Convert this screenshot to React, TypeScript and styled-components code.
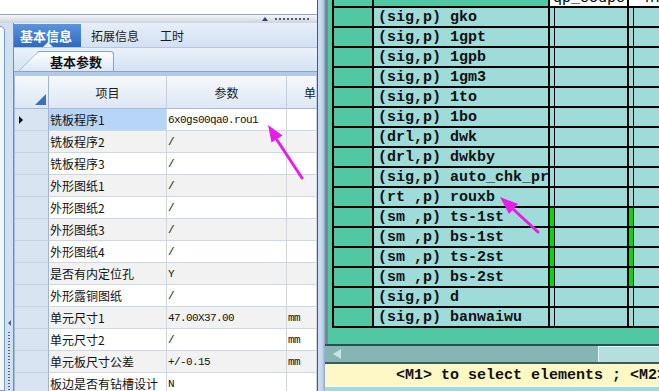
import React from 'react';
import styled, { createGlobalStyle } from 'styled-components';

type Param = { name: string; value: string; unit?: string };

const params: Param[] = [
  { name: '铣板程序1', value: '6x0gs00qa0.rou1' },
  { name: '铣板程序2', value: '/' },
  { name: '铣板程序3', value: '/' },
  { name: '外形图纸1', value: '/' },
  { name: '外形图纸2', value: '/' },
  { name: '外形图纸3', value: '/' },
  { name: '外形图纸4', value: '/' },
  { name: '是否有内定位孔', value: 'Y' },
  { name: '外形露铜图纸', value: '/' },
  { name: '单元尺寸1', value: '47.00X37.00', unit: 'mm' },
  { name: '单元尺寸2', value: '/', unit: 'mm' },
  { name: '单元板尺寸公差', value: '+/-0.15', unit: 'mm' },
  { name: '板边是否有钻槽设计', value: 'N' },
];

type Layer = { label: string; flagged?: boolean };

const layers: Layer[] = [
  { label: '(sig,p) gko' },
  { label: '(sig,p) 1gpt' },
  { label: '(sig,p) 1gpb' },
  { label: '(sig,p) 1gm3' },
  { label: '(sig,p) 1to' },
  { label: '(sig,p) 1bo' },
  { label: '(drl,p) dwk' },
  { label: '(drl,p) dwkby' },
  { label: '(sig,p) auto_chk_pr' },
  { label: '(rt ,p) rouxb' },
  { label: '(sm ,p) ts-1st', flagged: true },
  { label: '(sm ,p) bs-1st', flagged: true },
  { label: '(sm ,p) ts-2st', flagged: true },
  { label: '(sm ,p) bs-2st', flagged: true },
  { label: '(sig,p) d' },
  { label: '(sig,p) banwaiwu' },
];

const GlobalStyle = createGlobalStyle`
  html, body {
    margin: 0;
    padding: 0;
    background: #fff;
    overflow: hidden;
  }
  * { box-sizing: border-box; }
`;

export default function App() {
  return (
    <>
      <GlobalStyle />
      <Page>
        <LeftPanel>
          <TopBlank />
          <TitleBar>
            <CaretUp />
            <Grip />
          </TitleBar>
          <LeftBody>
            <SideDock>
              <DockTab />
              <DockGrip>
                <DockArrow />
                <DockDots />
              </DockGrip>
            </SideDock>
            <Editor>
              <TabStrip>
                <Tab $active>基本信息</Tab>
                <Tab>拓展信息</Tab>
                <Tab>工时</Tab>
              </TabStrip>
              <SubTabStrip>
                <SubTab>基本参数</SubTab>
              </SubTabStrip>
              <SubTabBand />
              <PropGrid>
                <CornerCell><CornerMark /></CornerCell>
                <HeadCell>项目</HeadCell>
                <HeadCell>参数</HeadCell>
                <HeadCell $indent>单位</HeadCell>
                {params.map((p, i) => {
                  const alt = i % 2 === 1;
                  const selected = i === 0;
                  return (
                    <React.Fragment key={p.name}>
                      <RowHead>{selected && <RowMarker />}</RowHead>
                      <NameCell $alt={alt} $selected={selected}>{p.name}</NameCell>
                      <ValueCell $alt={alt}>{p.value}</ValueCell>
                      <ValueCell $alt={alt}>{p.unit}</ValueCell>
                    </React.Fragment>
                  );
                })}
              </PropGrid>
            </Editor>
          </LeftBody>
        </LeftPanel>

        <Divider />

        <RightPanel>
          <ListArea>
            <ListGrid>
              <TealCell />
              <TealCell />
              <ColumnTitle>qp_coupc</ColumnTitle>
              <ColumnTitle $indent>nf</ColumnTitle>
              {layers.map((l) => (
                <React.Fragment key={l.label}>
                  <TealCell />
                  <LayerName>{l.label}</LayerName>
                  <DataCell><DataFlag $on={l.flagged} /></DataCell>
                  <DataCell><DataFlag $on={l.flagged} /></DataCell>
                </React.Fragment>
              ))}
            </ListGrid>
          </ListArea>
          <HScroll>
            <ScrollArrow />
            <ScrollThumb />
          </HScroll>
          <StatusLine>{'<M1> to select elements ; <M2> to select features'}</StatusLine>
          <BottomBar />
        </RightPanel>

        <Annotations viewBox="0 0 659 391">
          <line x1="302" y1="178" x2="277" y2="140" stroke="#e61ee6" strokeWidth="3" strokeLinecap="round" />
          <polygon points="268,125 282.5,135.5 271.5,142.5" fill="#e61ee6" />
          <line x1="538" y1="232" x2="513" y2="209" stroke="#e61ee6" strokeWidth="3" strokeLinecap="round" />
          <polygon points="500,197 518,204 509,214" fill="#e61ee6" />
        </Annotations>
      </Page>
    </>
  );
}

const Page = styled.div`
  position: relative;
  display: flex;
  width: 659px;
  height: 391px;
  overflow: hidden;
  background: #fff;
`;

/* ---------- left: property editor ---------- */

const LeftPanel = styled.div`
  flex: none;
  width: 318px;
  display: flex;
  flex-direction: column;
  border-right: 1px solid #4b5a70;
  background: #fff;
`;

const TopBlank = styled.div`
  height: 14px;
  background: #fff;
`;

const TitleBar = styled.div`
  height: 9px;
  border-top: 1px solid #98a4b6;
  background: linear-gradient(#f4f6f9, #ccd4df);
  display: flex;
  align-items: center;
  justify-content: flex-end;
  gap: 7px;
  padding-right: 6px;
`;

const CaretUp = styled.span`
  width: 0;
  height: 0;
  border-left: 3px solid transparent;
  border-right: 3px solid transparent;
  border-bottom: 4px solid #2a4470;
`;

const Grip = styled.span`
  width: 36px;
  height: 2px;
  background: repeating-linear-gradient(to right, #4f5f78 0 2px, transparent 2px 4px);
`;

const LeftBody = styled.div`
  flex: 1;
  min-height: 0;
  display: flex;
  background: #d3e0f2;
`;

const SideDock = styled.div`
  flex: none;
  width: 13px;
  display: flex;
`;

const DockTab = styled.div`
  width: 5px;
  margin-top: 3px;
  background: #f3f6fb;
  border: 1px solid #7f99bf;
  border-left: none;
  border-radius: 0 5px 0 0;
`;

const DockGrip = styled.div`
  flex: 1;
  display: flex;
  flex-direction: column;
  align-items: center;
  justify-content: flex-end;
`;

const DockArrow = styled.span`
  width: 0;
  height: 0;
  margin-bottom: 6px;
  border-top: 3px solid transparent;
  border-bottom: 3px solid transparent;
  border-right: 3px solid #4a6690;
`;

const DockDots = styled.span`
  width: 2px;
  height: 59px;
  background: repeating-linear-gradient(#4a6690 0 1px, transparent 1px 3px);
`;

const Editor = styled.div`
  flex: 1;
  min-width: 0;
  display: flex;
  flex-direction: column;
  border-left: 1px solid #6f8db6;
  overflow: hidden;
`;

const TabStrip = styled.div`
  height: 25px;
  padding-top: 1px;
  display: flex;
  background: linear-gradient(#e6eef9, #d3e1f3);
  border-bottom: 1px solid #b3c7e2;
`;

const Tab = styled.div<{ $active?: boolean }>`
  position: relative;
  display: flex;
  align-items: center;
  padding: ${(p) => (p.$active ? '0 9px 0 6px' : '0 11px 0 10px')};
  font-family: "Noto Sans CJK SC", sans-serif;
  font-size: ${(p) => (p.$active ? '13px' : '12px')};
  font-weight: ${(p) => (p.$active ? 'bold' : 'normal')};
  color: ${(p) => (p.$active ? '#fff' : '#1b1b1b')};
  background: ${(p) => (p.$active ? 'linear-gradient(#5b95de, #2e69c0)' : 'transparent')};

  &::after {
    content: '';
    display: ${(p) => (p.$active ? 'block' : 'none')};
    position: absolute;
    bottom: 0;
    left: 50%;
    margin-left: -5px;
    border-left: 5px solid transparent;
    border-right: 5px solid transparent;
    border-bottom: 5px solid #eef3fa;
  }
`;

const SubTabStrip = styled.div`
  height: 23px;
  display: flex;
  align-items: flex-end;
  padding-left: 24px;
  background: linear-gradient(#eaf1fa, #d6e3f4);
`;

const SubTab = styled.div`
  position: relative;
  z-index: 0;
  height: 20px;
  display: flex;
  align-items: center;
  padding: 0 11px 0 12px;
  font-family: "Noto Sans CJK SC", sans-serif;
  font-size: 13px;
  font-weight: bold;
  color: #111;
  background: linear-gradient(#ffffff, #dce8f7);
  border-top: 1px solid #86a3cc;
  border-right: 1px solid #86a3cc;
  border-radius: 0 4px 0 0;

  &::before {
    content: '';
    position: absolute;
    z-index: -1;
    left: -20px;
    top: -1px;
    bottom: 0;
    width: 30px;
    border-left: 1px solid #86a3cc;
    border-top: 1px solid #86a3cc;
    border-radius: 3px 0 0 0;
    background: linear-gradient(#ffffff, #dce8f7);
    transform: skewX(-45deg);
    transform-origin: bottom left;
  }
`;

const SubTabBand = styled.div`
  height: 5px;
  border-top: 1px solid #86a3cc;
  background: #b4c9e7;
`;

const PropGrid = styled.div`
  flex: 1;
  display: grid;
  grid-template-columns: 34px 118px 120px 1fr;
  grid-template-rows: 33px;
  grid-auto-rows: 22px;
  border-left: 1px solid #a6bad6;
  background: #fff;
  overflow: hidden;
`;

const HeadCell = styled.div<{ $indent?: boolean }>`
  display: flex;
  align-items: center;
  justify-content: ${(p) => (p.$indent ? 'flex-start' : 'center')};
  padding-left: ${(p) => (p.$indent ? '17px' : '0')};
  white-space: nowrap;
  overflow: hidden;
  font-family: "Noto Sans CJK SC", sans-serif;
  font-size: 12px;
  color: #1b1b1b;
  background: linear-gradient(#f6f9fd, #dde7f4);
  border-right: 1px solid #c2d0e3;
  border-bottom: 1px solid #a9bcd6;
`;

const CornerCell = styled(HeadCell)`
  align-items: flex-end;
  justify-content: flex-end;
  padding: 0 2px 3px 0;
  border-right-color: #9fb4d2;
`;

const CornerMark = styled.span`
  width: 0;
  height: 0;
  border-left: 11px solid transparent;
  border-bottom: 11px solid #3a70c2;
`;

const RowHead = styled.div`
  display: flex;
  align-items: center;
  padding-left: 4px;
  background: #d9e4f3;
  border-right: 1px solid #9fb4d2;
  border-bottom: 1px solid #c4d3e7;
`;

const RowMarker = styled.span`
  width: 0;
  height: 0;
  border-top: 4px solid transparent;
  border-bottom: 4px solid transparent;
  border-left: 4px solid #111;
`;

const NameCell = styled.div<{ $alt: boolean; $selected: boolean }>`
  display: flex;
  align-items: center;
  padding-left: 1px;
  white-space: nowrap;
  overflow: hidden;
  font-family: "Noto Sans CJK SC", sans-serif;
  font-size: 12px;
  color: #111;
  background: ${(p) => (p.$selected ? '#b7d5f6' : p.$alt ? '#f2f2f2' : '#fff')};
  border-right: 1px solid #cdd8e6;
  border-bottom: 1px solid #cdd8e6;
`;

const ValueCell = styled.div<{ $alt: boolean }>`
  display: flex;
  align-items: center;
  padding-left: 1px;
  white-space: nowrap;
  overflow: hidden;
  font-family: "Liberation Mono", monospace;
  font-size: 11px;
  letter-spacing: -0.6px;
  color: #111;
  background: ${(p) => (p.$alt ? '#f2f2f2' : '#fff')};
  border-right: 1px solid #cdd8e6;
  border-bottom: 1px solid #cdd8e6;
`;

const Divider = styled.div`
  flex: none;
  width: 7px;
  background: linear-gradient(to right, #d0e0f3, #c4d6ee 60%, #8fa7c4);
`;

/* ---------- right: layer list ---------- */

const RightPanel = styled.div`
  flex: 1;
  min-width: 0;
  display: flex;
  flex-direction: column;
  background: #52c7a3;
`;

const ListArea = styled.div`
  flex: 1;
  min-height: 0;
  overflow: hidden;
  padding-left: 4px;
  border-left: 3px solid #6a8e94;
`;

const ListGrid = styled.div`
  display: grid;
  grid-template-columns: 38px 174px 77px 60px;
  grid-auto-rows: 18px;
  gap: 2px;
  width: max-content;
  margin-top: -14px;
  border: 2px solid #000;
  background: #000;
`;

const TealCell = styled.div`
  background: #52c7a3;
`;

const ColumnTitle = styled.div<{ $indent?: boolean }>`
  padding: 3px 0 0 ${(p) => (p.$indent ? '16px' : '3px')};
  overflow: hidden;
  white-space: nowrap;
  font-family: "Liberation Mono", monospace;
  font-size: 15px;
  line-height: 15px;
  color: #000;
  background: #fff;
`;

const LayerName = styled.div`
  display: flex;
  align-items: center;
  padding-left: 4px;
  overflow: hidden;
  white-space: pre;
  font-family: "Liberation Mono", monospace;
  font-size: 15px;
  font-weight: bold;
  color: #111;
  background: #9edbd9;
`;

const DataCell = styled.div`
  display: flex;
  background: #9edbd9;
`;

const DataFlag = styled.span<{ $on?: boolean }>`
  width: 5px;
  border-right: 1px solid #000;
  background: ${(p) => (p.$on ? '#00dc00' : '#9edbd9')};
`;

const HScroll = styled.div`
  flex: none;
  height: 20px;
  display: flex;
  align-items: stretch;
  border-top: 2px solid #2f4f4c;
  border-bottom: 2px solid #3d5a57;
  background: #86b5b3;
`;

const ScrollArrow = styled.span`
  align-self: center;
  width: 0;
  height: 0;
  margin-left: 8px;
  border-top: 5px solid transparent;
  border-bottom: 5px solid transparent;
  border-right: 8px solid #c6e5e3;
`;

const ScrollThumb = styled.span`
  margin-left: auto;
  width: 61px;
  background: #b4dfdd;
  border-top: 1px solid #e2f5f4;
  border-left: 1px solid #e2f5f4;
`;

const StatusLine = styled.div`
  flex: none;
  height: 22px;
  display: flex;
  align-items: center;
  padding-left: 71px;
  white-space: pre;
  overflow: hidden;
  font-family: "Liberation Mono", monospace;
  font-size: 15px;
  font-weight: bold;
  color: #111;
  background: #fdf8c6;
`;

const BottomBar = styled.div`
  flex: none;
  height: 5px;
  border-top: 1px solid #f2fbfa;
  background: #a6dcd8;
`;

const Annotations = styled.svg`
  position: absolute;
  left: 0;
  top: 0;
  width: 659px;
  height: 391px;
  pointer-events: none;
`;
